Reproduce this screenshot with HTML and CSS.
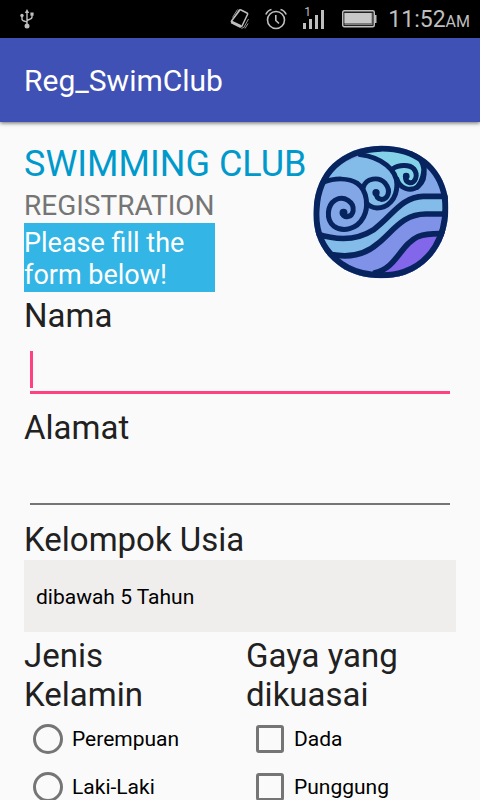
FILE: index.html
```html
<!DOCTYPE html>
<html lang="id">
<head>
<meta charset="utf-8">
<meta name="viewport" content="width=device-width, initial-scale=1">
<title>Reg_SwimClub</title>
<link rel="stylesheet" href="styles.css">
</head>
<body>
<div class="status">
  <svg class="usb" width="14" height="20" viewBox="0 0 14 20" fill="none" stroke="#bebebe" stroke-width="1.4">
    <path d="M7 3v13M7 13.5C6.500 11.500 2 13 2 10V7M7 12c.5-2 5-1 5-4V5"/>
    <path d="M7 0l2.200 4H4.800z" fill="#bebebe" stroke="none"/>
    <circle cx="7" cy="17" r="2.500" fill="#bebebe" stroke="none"/>
    <circle cx="2" cy="6.500" r="1.700" fill="#bebebe" stroke="none"/>
    <path d="M10.400 3.500h3.200v3.200h-3.200z" fill="#bebebe" stroke="none"/>
  </svg>
  <svg class="vibrate" width="20" height="22" viewBox="0 0 20 22" fill="none" stroke="#bebebe">
    <path d="M11 2l6 3q1 .5.500 1.500L12 18q-.5 1-1.500.5L2 14.500q-1-.5-.5-1.500L9.500 2.500q.5-1 1.500-.5z" stroke-width="1.500"/>
    <path d="M1.500 14l9.500 4.700" stroke-width="3"/>
    <path d="M2.500 9.500l5-8M4.500 9l5-8M13.500 20l5-9M11.500 21l2-2M15 20.500l3-5" stroke-width=".8"/>
  </svg>
  <svg class="alarm" width="22" height="22" viewBox="0 0 22 22" fill="none" stroke="#bebebe" stroke-width="1.600">
    <circle cx="11" cy="12" r="8.500"/>
    <path d="M10.800 7v5.500l3.200 3M.8 6.500Q2.500 2.500 6.500 1.500M21.200 6.500Q19.500 2.500 15.500 1.500"/>
  </svg>
  <span class="signal">
    <svg width="22" height="20" viewBox="0 0 22 20" fill="#bebebe">
      <path d="M0 14h3v6H0zM6 10h3v10H6zM12 6h3v14h-3zM18 1h3v19h-3z"/>
    </svg>
    <span class="sim">1</span>
  </span>
  <svg class="battery" width="35" height="18" viewBox="0 0 35 18">
    <rect x=".7" y=".7" width="31.600" height="16" rx="1.500" fill="#222" stroke="#bebebe" stroke-width="1.400"/>
    <path d="M33 5h1.500v8H33z" fill="#bebebe"/>
    <path d="M2.500 3h28v12h-28z" fill="#7c7c7c"/>
    <path d="M2.500 3h27v10h-27z" fill="#c8c8c8"/>
  </svg>
  <span class="time">11:52<small>AM</small></span>
</div>
<header class="appbar"><h1>Reg_SwimClub</h1></header>
<form class="content">
  <div class="intro">
    <div>
      <h2>SWIMMING CLUB</h2>
      <div class="narrow">
        <h3>REGISTRATION</h3>
        <p class="note">Please fill the form below!</p>
      </div>
    </div>
    <svg class="logo" width="136" height="134" viewBox="38 30 410 402" aria-hidden="true">
      <defs>
        <clipPath id="globe"><path d="M243 31C350 30 428 90 444 185C458 310 395 392 315 420C260 438 175 435 120 395C55 350 35 285 40 220C46 110 120 34 243 31Z"/></clipPath>
      </defs>
      <g clip-path="url(#globe)" stroke="#07245f" stroke-width="17" fill="none" stroke-linecap="round">
        <path d="M38 30h410v402H38z" fill="#83a6e7" stroke="none"/>
        <path d="M70 140C110 90 150 66 190 65C245 68 290 105 291 145C292 190 260 219 232 219C200 218 182 188 190 155C165 132 120 125 70 140Z" fill="#84bce9" stroke="none"/>
        <path d="M195 56C260 30 330 50 358 80C378 105 378 140 350 160C320 172 296 150 290 120C275 80 245 67 195 56Z" fill="#83d2e8" stroke="none"/>
        <path d="M50 300C120 320 175 314 220 285C275 245 305 185 370 184H450V430H50Z" fill="#84bce9" stroke="none"/>
        <path d="M50 354C120 372 185 370 235 325C280 288 310 236 380 237H450V440H50Z" fill="#8092e8" stroke="none"/>
        <path d="M230 418C290 400 300 330 355 305Q385 293 450 297V440H230Z" fill="#8267ea" stroke="none"/>
        <path d="M50 297C120 320 175 314 220 285C275 245 305 185 370 184H450M50 347C120 372 185 370 235 325C280 288 310 236 380 237H450M225 414C290 400 300 330 355 305Q385 293 450 297"/>
        <g stroke-width="15">
          <path d="M66 142C105 128 145 128 172 145C203 167 206 218 190 247C171 283 128 294 100 273C76 252 81 210 105 195C132 180 163 201 159 228C155 248 132 250 127 236"/>
          <path d="M180 58C245 66 291 104 291 148C291 193 262 219 231 219Q210 217 199 203M189 158C197 129 236 122 256 145C275 168 263 193 244 193Q228 190 229 174"/>
          <path d="M340 50C377 76 384 128 356 153C332 172 299 160 291 132M278 101C297 87 331 88 342 101C358 122 344 144 330 143Q314 139 318 121"/>
          <path d="M374 82C374 116 365 142 352 157"/>
        </g>
        <circle cx="130" cy="233" r="12" fill="#07245f" stroke="none"/>
        <circle cx="228" cy="173" r="11" fill="#07245f" stroke="none"/>
        <circle cx="319" cy="123" r="10" fill="#07245f" stroke="none"/>
        <path stroke-width="36" d="M243 31C350 30 428 90 444 185C458 310 395 392 315 420C260 438 175 435 120 395C55 350 35 285 40 220C46 110 120 34 243 31Z"/>
      </g>
    </svg>
  </div>
  <label class="caption" for="nama">Nama</label>
  <div class="field"><input class="text active" id="nama" type="text"></div>
  <label class="caption" for="alamat">Alamat</label>
  <div class="field"><input class="text" id="alamat" type="text"></div>
  <label class="caption" for="usia">Kelompok Usia</label>
  <select class="spinner" id="usia"><option>dibawah 5 Tahun</option></select>
  <div class="columns">
    <div role="group" aria-labelledby="jenis">
      <div class="caption" id="jenis">Jenis<br>Kelamin</div>
      <label class="choice"><input type="radio" name="jenis">Perempuan</label>
      <label class="choice"><input type="radio" name="jenis">Laki-Laki</label>
    </div>
    <div role="group" aria-labelledby="gaya">
      <div class="caption" id="gaya">Gaya yang dikuasai</div>
      <label class="choice"><input type="checkbox" name="gaya">Dada</label>
      <label class="choice"><input type="checkbox" name="gaya">Punggung</label>
    </div>
  </div>
</form>
</body>
</html>
```
FILE: styles.css
```css
* { box-sizing: border-box; }
html { scrollbar-width: none; }
body {
  margin: 0;
  background: #fafafa;
  color: #212121;
  font-family: Roboto, "Liberation Sans", sans-serif;
}
h1, h2, h3, p { margin: 0; font-weight: 400; }

.status {
  display: flex;
  align-items: center;
  height: 38px;
  padding: 0 10px 0 20px;
  background: #000;
  color: #bebebe;
}
.usb { margin-right: auto; }
.vibrate { margin-right: 15px; }
.alarm { margin-right: 16px; }
.signal { position: relative; display: flex; margin-right: 17px; }
.sim { position: absolute; left: 1px; top: -4px; font-size: 12px; line-height: 14px; }
.battery { margin-right: 11px; }
.time { padding-top: 4px; font-size: 23px; line-height: 34px; }
.time small { font-size: 16px; }

.appbar {
  height: 84px;
  padding: 0 24px;
  background: #3f51b5;
  color: #fff;
  box-shadow: 0 1px 4px rgba(0, 0, 0, .6);
}
.appbar h1 { font-size: 30px; line-height: 86px; }

.content { padding: 20px 24px 0; }
.intro { display: flex; justify-content: space-between; padding-right: 7px; }
.intro h2 { color: #0099cc; font-size: 36px; line-height: 44px; white-space: nowrap; }
.intro h3 { padding-top: 3px; color: #757575; font-size: 28px; line-height: 34px; }
.narrow { width: min-content; }
.note {
  padding: 4px 0 1px;
  background: #33b5e5;
  color: #fff;
  font-size: 27px;
  line-height: 32px;
}
.logo { flex: none; margin-top: 3px; }

.caption { display: block; padding: 4px 0 1px; font-size: 33px; line-height: 39px; }
.field { height: 68px; padding: 7px 6px 10px; }
.text {
  display: block;
  width: 100%;
  height: 50px;
  padding: 0;
  border: 0;
  border-bottom: 2px solid #757575;
  outline: 0;
  background: none;
  color: #212121;
  font: 27px Roboto, sans-serif;
}
.text.active {
  height: 51px;
  border-bottom: 3px solid #ff4081;
  background: linear-gradient(#ff4081, #ff4081) 0 8px / 3px 37px no-repeat;
}
.spinner {
  display: block;
  width: 100%;
  height: 72px;
  padding: 2px 12px 0;
  border: 0;
  border-radius: 0;
  appearance: none;
  background: #efeeed;
  color: #000;
  font: 21px Roboto, sans-serif;
}
.columns { display: grid; grid-template-columns: 37fr 35fr; }
.choice {
  display: flex;
  align-items: center;
  height: 48px;
  color: #000;
  font-size: 21px;
  line-height: 27px;
}
.choice input { appearance: none; margin: 0; border: 3px solid #757575; }
.choice input[type="radio"] {
  width: 30px;
  height: 30px;
  margin: 0 9px;
  border-radius: 50%;
}
.choice input[type="checkbox"] {
  width: 28px;
  height: 28px;
  margin: 0 10px;
  border-radius: 3px;
}
```
